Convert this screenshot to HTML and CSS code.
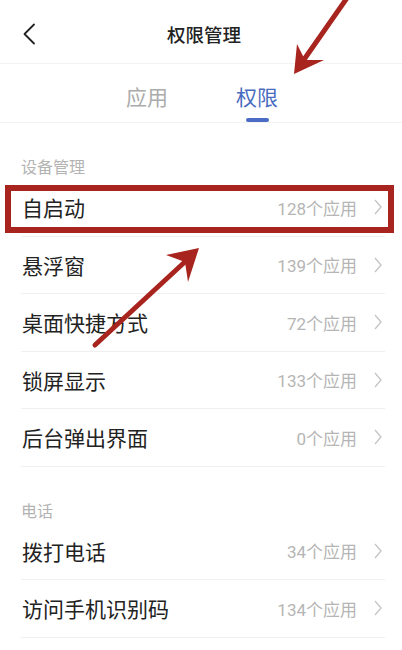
FILE: index.html
```html
<!DOCTYPE html>
<html lang="zh-CN">
<head>
<meta charset="utf-8">
<title>权限管理</title>
<link rel="stylesheet" href="styles.css">
</head>
<body>
<div class="page">
  <div class="status"></div>
  <header class="nav">
    <svg class="back" width="14" height="22" viewBox="0 0 14 22"><path d="M12 1.5 L2.5 11 L12 20.5" fill="none" stroke="#222" stroke-width="1.8" stroke-linecap="round" stroke-linejoin="round"/></svg>
    <h1 class="title">权限管理</h1>
    <span class="nav-spacer"></span>
  </header>
  <nav class="tabs">
    <div class="tab">应用</div>
    <div class="tab active">权限</div>
  </nav>

  <div class="section">设备管理</div>
  <ul class="list">
    <li class="row"><span class="label">自启动</span><span class="count">128个应用</span><svg class="chev" width="8" height="16" viewBox="0 0 8 16"><path d="M1 1 L7 8 L1 15" fill="none" stroke="#c4c4c4" stroke-width="1.3"/></svg></li>
    <li class="row"><span class="label">悬浮窗</span><span class="count">139个应用</span><svg class="chev" width="8" height="16" viewBox="0 0 8 16"><path d="M1 1 L7 8 L1 15" fill="none" stroke="#c4c4c4" stroke-width="1.3"/></svg></li>
    <li class="row"><span class="label">桌面快捷方式</span><span class="count">72个应用</span><svg class="chev" width="8" height="16" viewBox="0 0 8 16"><path d="M1 1 L7 8 L1 15" fill="none" stroke="#c4c4c4" stroke-width="1.3"/></svg></li>
    <li class="row"><span class="label">锁屏显示</span><span class="count">133个应用</span><svg class="chev" width="8" height="16" viewBox="0 0 8 16"><path d="M1 1 L7 8 L1 15" fill="none" stroke="#c4c4c4" stroke-width="1.3"/></svg></li>
    <li class="row"><span class="label">后台弹出界面</span><span class="count">0个应用</span><svg class="chev" width="8" height="16" viewBox="0 0 8 16"><path d="M1 1 L7 8 L1 15" fill="none" stroke="#c4c4c4" stroke-width="1.3"/></svg></li>
  </ul>

  <div class="section">电话</div>
  <ul class="list">
    <li class="row"><span class="label">拨打电话</span><span class="count">34个应用</span><svg class="chev" width="8" height="16" viewBox="0 0 8 16"><path d="M1 1 L7 8 L1 15" fill="none" stroke="#c4c4c4" stroke-width="1.3"/></svg></li>
    <li class="row"><span class="label">访问手机识别码</span><span class="count">134个应用</span><svg class="chev" width="8" height="16" viewBox="0 0 8 16"><path d="M1 1 L7 8 L1 15" fill="none" stroke="#c4c4c4" stroke-width="1.3"/></svg></li>
  </ul>

  <svg class="annot" width="402" height="650" viewBox="0 0 402 650">
    <rect x="8" y="188" width="383" height="42" fill="none" stroke="#a8241e" stroke-width="6"/>
    <line x1="347" y1="-2" x2="303" y2="61" stroke="#a8241e" stroke-width="5" stroke-linecap="round"/>
    <polygon points="294,74 297,44 305,60 324,60" fill="#a8241e"/>
    <line x1="95" y1="345" x2="188" y2="259" stroke="#a8241e" stroke-width="5" stroke-linecap="round"/>
    <polygon points="199,248 166,255 185,262 188,282" fill="#a8241e"/>
  </svg>
</div>
</body>
</html>
```
FILE: styles.css
```css
* { box-sizing: border-box; }
html, body { margin: 0; padding: 0; background: #fff; }
body {
  font-family: "Noto Sans CJK SC", "Noto Sans", sans-serif;
  color: #222;
}
.page {
  position: relative;
  width: 402px;
  height: 650px;
  overflow: hidden;
  background: #fff;
}
.status { height: 6px; }
.nav {
  height: 58px;
  display: flex;
  align-items: center;
  padding: 0 22px;
  border-bottom: 1px solid #f2f2f2;
}
.back { display: block; flex: none; margin-bottom: 2px; }
.nav-spacer { width: 14px; flex: none; }
.title {
  flex: 1;
  margin: 0;
  text-align: center;
  font-size: 18.5px;
  font-weight: 500;
  color: #222;
  padding-left: 6px;
  margin-bottom: 2px;
}
.tabs {
  height: 59px;
  display: flex;
  justify-content: center;
  gap: 68px;
  border-bottom: 1px solid #f2f2f2;
  padding-left: 2px;
}
.tab {
  position: relative;
  font-size: 21px;
  line-height: 28px;
  padding-top: 18px;
  color: #ababab;
}
.tab.active { color: #4a6cbf; }
.tab.active::after {
  content: "";
  position: absolute;
  left: 10px;
  right: 9px;
  bottom: 0;
  height: 4px;
  border-radius: 2px;
  background: #4a6cc4;
}
.section {
  height: 56px;
  padding: 33px 21px 0;
  font-size: 16px;
  line-height: 20px;
  color: #b3b3b3;
}
.list { list-style: none; margin: 0; padding: 0 17px 0 21px; }
.row {
  height: 57.5px;
  display: flex;
  align-items: center;
  border-bottom: 1px solid #f0f0f0;
}
.label {
  flex: 1;
  font-size: 21px;
  color: #222;
  padding-left: 1px;
}
.count {
  font-family: "Roboto", "Noto Sans CJK SC", sans-serif;
  font-size: 17px;
  color: #b5b5b5;
  margin-right: 17px;
}
.chev {
  display: block;
  flex: none;
  margin-right: 3px;
}
.annot {
  position: absolute;
  left: 0;
  top: 0;
  pointer-events: none;
}
```
